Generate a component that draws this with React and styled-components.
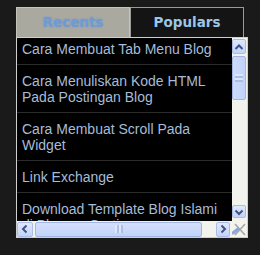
import React from "react";
import styled, { createGlobalStyle } from "styled-components";

const Global = createGlobalStyle`
  html, body { margin: 0; padding: 0; background: #1a1a1a; }
  body { width: 260px; height: 255px; overflow: hidden; }
`;

const Widget = styled.div`
  margin: 7px 0 0 16px;
  width: 232px;
`;

const TabRow = styled.div`
  display: flex;
`;

const Tab = styled.div`
  box-sizing: border-box;
  width: 114px;
  height: 30px;
  display: flex;
  align-items: center;
  justify-content: center;
  padding-bottom: 2px;
  font-family: "DejaVu Sans", Verdana, sans-serif;
  font-weight: bold;
  font-size: 13.5px;
  background: ${p => (p.$muted ? "#a9a9a0" : "#141414")};
  color: ${p => (p.$muted ? "#6f9bd2" : "#9cc6e6")};
  border: 1px solid ${p => (p.$muted ? "#c4c4bc" : "#9a9a9a")};
  border-bottom: none;
  text-shadow: ${p => (p.$muted ? "0 0 2px rgba(110,150,210,0.9)" : "none")};
`;

const Panel = styled.div`
  box-sizing: border-box;
  width: 232px;
  height: 201px;
  border: 1px solid #cfcfcf;
  background: #000;
  display: grid;
  grid-template-columns: 215px 15px;
  grid-template-rows: 183px 16px;
`;

const List = styled.ul`
  margin: 0;
  padding: 0;
  list-style: none;
  overflow: hidden;
`;

const Item = styled.li`
  padding: ${p => (p.$first ? "3px" : "8px")} 6px 7px 5px;
  border-bottom: 1px solid #2c2c2c;
  font-family: "Liberation Sans", Arial, sans-serif;
  font-size: 14px;
  line-height: 16px;
  color: #a6bcd8;
`;

const VScroll = styled.div`
  background: #f3f3ee;
  display: flex;
  flex-direction: column;
  padding: 1px 1px 3px 0;
`;

const HScroll = styled.div`
  background: #f3f3ee;
  display: flex;
  align-items: center;
  padding: 0 2px 0 0;
`;

const Corner = styled.div`
  background: #f3f3ee;
  display: flex;
  align-items: center;
  justify-content: center;
`;

const ArrowBtn = styled.div`
  box-sizing: border-box;
  width: ${p => p.$w}px;
  height: ${p => p.$h}px;
  border: 1px solid #a9bce6;
  border-radius: 2px;
  background: linear-gradient(180deg, #dfe8fd 0%, #c3d3f7 100%);
  display: flex;
  align-items: center;
  justify-content: center;
  flex: none;
`;

const VThumb = styled.div`
  box-sizing: border-box;
  margin-top: 2px;
  height: 44px;
  border: 1px solid #a3b6e2;
  border-radius: 2px;
  background: linear-gradient(90deg, #cddbfb 0%, #c2d2f8 100%);
  display: flex;
  align-items: center;
  justify-content: center;
`;

const HThumb = styled.div`
  box-sizing: border-box;
  margin-left: 2px;
  width: 167px;
  height: 15px;
  border: 1px solid #a3b6e2;
  border-radius: 2px;
  background: linear-gradient(180deg, #d3dffc 0%, #c2d2f8 100%);
  display: flex;
  align-items: center;
  justify-content: center;
`;

const Spacer = styled.div`
  flex: 1;
`;

const Chevron = ({ dir }) => {
  const d = {
    up: "M2.5 8 L6 4.5 L9.5 8",
    down: "M2.5 4.5 L6 8 L9.5 4.5",
    left: "M7.5 2.5 L4 6 L7.5 9.5",
    right: "M4.5 2.5 L8 6 L4.5 9.5",
  }[dir];
  return (
    <svg width="12" height="12" viewBox="0 0 12 12">
      <path d={d} fill="none" stroke="#3f5486" strokeWidth="2" />
    </svg>
  );
};

const GripV = () => (
  <svg width="8" height="8" viewBox="0 0 8 8">
    {[1, 3, 5, 7].map(y => (
      <line key={y} x1="0" x2="8" y1={y} y2={y} stroke={y % 4 === 1 ? "#f2f6ff" : "#8ea3d6"} strokeWidth="1" />
    ))}
  </svg>
);

const GripH = () => (
  <svg width="8" height="8" viewBox="0 0 8 8">
    {[1, 3, 5, 7].map(x => (
      <line key={x} y1="0" y2="8" x1={x} x2={x} stroke={x % 4 === 1 ? "#f2f6ff" : "#8ea3d6"} strokeWidth="1" />
    ))}
  </svg>
);

const Grip = () => (
  <svg width="15" height="16" viewBox="0 0 15 16">
    <path d="M3 3 L13 14 M13 3 L3 14" stroke="#a6a6a6" strokeWidth="1.6" fill="none" />
    <path d="M1 12 L6 8" stroke="#8aa6dc" strokeWidth="3" strokeLinecap="round" />
  </svg>
);

const items = [
  "Cara Membuat Tab Menu Blog",
  "Cara Menuliskan Kode HTML Pada Postingan Blog",
  "Cara Membuat Scroll Pada Widget",
  "Link Exchange",
  "Download Template Blog Islami di Blogger Gratis",
];

export default function App() {
  return (
    <>
      <Global />
      <Widget>
        <TabRow>
          <Tab $muted>Recents</Tab>
          <Tab>Populars</Tab>
        </TabRow>
        <Panel>
          <List>
            {items.map((t, i) => (
              <Item key={i} $first={i === 0}>{t}</Item>
            ))}
          </List>
          <VScroll>
            <ArrowBtn $w={14} $h={15}><Chevron dir="up" /></ArrowBtn>
            <VThumb><GripV /></VThumb>
            <Spacer />
            <ArrowBtn $w={14} $h={13}><Chevron dir="down" /></ArrowBtn>
          </VScroll>
          <HScroll>
            <ArrowBtn $w={16} $h={15}><Chevron dir="left" /></ArrowBtn>
            <HThumb><GripH /></HThumb>
            <Spacer />
            <ArrowBtn $w={14} $h={15}><Chevron dir="right" /></ArrowBtn>
          </HScroll>
          <Corner><Grip /></Corner>
        </Panel>
      </Widget>
    </>
  );
}
